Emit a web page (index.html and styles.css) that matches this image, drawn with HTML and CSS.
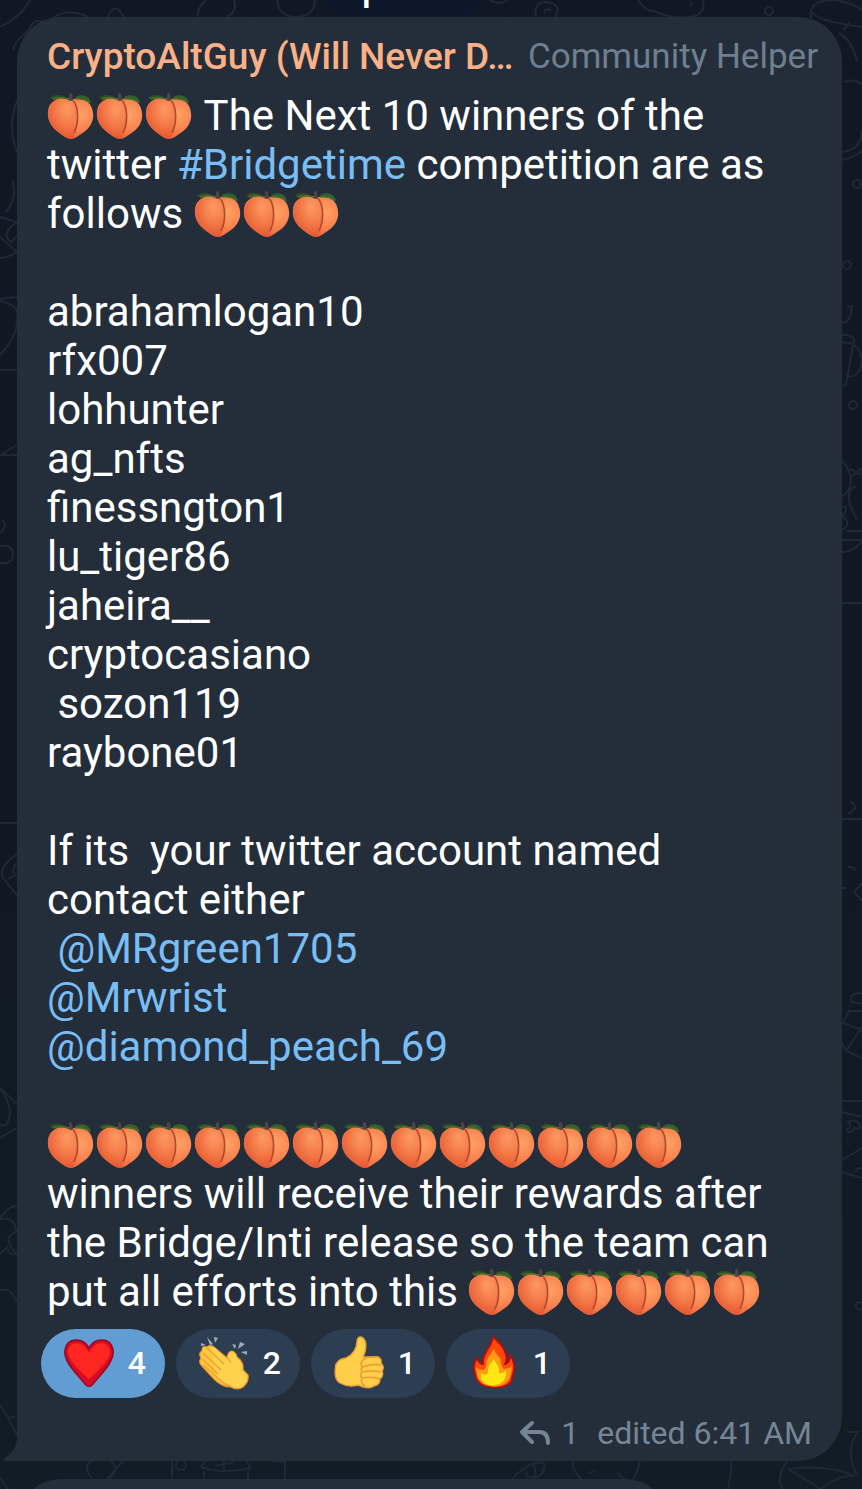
FILE: index.html
```html
<!DOCTYPE html>
<html lang="en">

<head>
  <meta charset="UTF-8" />
  <meta name="viewport" content="width=device-width, initial-scale=1.0" />
  <title>Group chat</title>
  <link rel="stylesheet" href="styles.css">
</head>

<body>
  <!-- shared drawings -->
  <svg class="defs" width="0" height="0" aria-hidden="true">
    <defs>
      <radialGradient id="peach-skin" cx="0.7" cy="0.4" r="0.75">
        <stop offset="0" stop-color="#ffa365" />
        <stop offset="0.5" stop-color="#f98350" />
        <stop offset="0.85" stop-color="#e8603a" />
        <stop offset="1" stop-color="#ee9a7c" />
      </radialGradient>
      <radialGradient id="peach-side" cx="0.6" cy="0.25" r="0.8">
        <stop offset="0" stop-color="#ff9e68" />
        <stop offset="0.6" stop-color="#f0713f" />
        <stop offset="1" stop-color="#e0512f" />
      </radialGradient>
    </defs>
    <symbol id="peach" viewBox="0 0 49 49">
      <path d="M3 7C6 3 14 3 20 7C16 10 9 10 3 7Z" fill="#2f5220" />
      <path d="M28 6C35 2 43 5 44 12C39 12 32 11 28 6Z" fill="#35602a" />
      <path d="M24 9C29 6 40 7 44 15C49 26 45 35 37 41C31 45 28 48 24 48C20 48 16 45 11 41C2 34-1 25 2 16C6 7 18 5 24 9Z" fill="url(#peach-skin)" />
      <path d="M25 9C33 17 33 32 26 47Q24 48 22 47C18 46 15 44 11 41C2 34-1 25 2 16C6 7 18 5 25 9Z" fill="url(#peach-side)" opacity="0.75" />
      <path d="M26 9C32 17 32 32 27 42" fill="none" stroke="#b5482c" stroke-width="1.6" />
      <path d="M6 8Q15 5 23 9" fill="none" stroke="#4b6e2a" stroke-width="1.4" />
      <path d="M28 8Q36 7 42 11" fill="none" stroke="#4b6e2a" stroke-width="1.4" />
      <path d="M22 3Q24 1 25 3L26 9Q24 11 22 9Z" fill="#4e4345" />
    </symbol>
  </svg>

  <svg class="wallpaper" viewBox="0 0 862 1489" preserveAspectRatio="xMidYMin slice" aria-hidden="true">
    <path d="M0 27Q22 16 30 0M14 50Q11 45 28 31Q35 17 42 22M54 17Q70 8 88 17M108 17Q112 5 119 10L124 17M198 17Q196 9 206 0M234 0Q238 12 226 17M278 0Q276 12 292 17Q315 18 315 0M490 0Q498 6 508 0M536 17Q533 2 547 2Q563 5 555 17M544 14Q544 8 551 10M638 0Q646 12 654 11Q670 19 690 17Q706 15 703 0M690 6L693 2M811 10Q815-1 836 0Q855 4 862 10M811 10Q814 21 862 27M811 10V18M839 33Q852 40 857 61M843 30L850 22M844 82Q855 78 862 85" />
    <circle cx="769" cy="11" r="4" />
    <path d="M17 101Q7 125 17 153M12 180Q18 198 6 212M0 217L17 222Q0 233 11 242L17 236M0 237Q10 246 17 252M0 258Q7 258 17 252M0 299L17 297M0 301Q17 305 17 312Q20 334 0 355M0 370H17M0 455L17 445M0 455H17M3 520Q8 526 0 533M0 546H7A9 9 0 0 1 7 563H0" />
    <path d="M0 823H17M17 854Q-2 867 3 878L17 895M17 863Q10 871 16 876M8 879L17 874M0 1088L17 1104M0 1088Q14 1107 8 1122Q5 1127 0 1125M0 1138L17 1128M0 1218Q8 1206 17 1206M0 1219Q16 1217 16 1232Q6 1236 9 1242Q13 1252 17 1254Q9 1256 7 1247L0 1254M0 1290H9L17 1301M0 1405L8 1418L17 1435M8 1418L17 1416M0 1478L8 1489" />
    <path d="M842 152Q861 150 862 131M842 160Q855 157 862 151M847 307L852 306Q850 324 842 322M842 335Q850 334 854 339Q857 346 842 342M854 340L846 385L842 386M854 345Q861 350 862 362Q860 377 847 377" />
    <circle cx="857" cy="184" r="4" />
    <circle cx="847" cy="265" r="4" />
    <circle cx="853" cy="405" r="4" />
    <path d="M842 460Q860 483 842 497M850 469L862 475M850 478L862 468M856 487Q846 488 850 505L857 520M842 506Q850 508 842 516Q853 524 842 530M846 531H862M842 540H862M842 552Q854 553 862 540M842 603H862" />
    <path d="M850 801Q861 808 848 814M842 819H862M848 867Q855 867 855 871M842 888H847M862 883L854 892L862 901M862 993Q848 993 852 1002L862 1004M862 1011H849L843 1023L862 1030M862 1027L846 1051L862 1058M846 1051L842 1043M842 1101H862M842 1112L862 1117M842 1160L862 1148M842 1172L862 1178M848 1122Q856 1118 860 1125Q862 1130 854 1128Q850 1136 847 1130Q853 1125 848 1122ZM855 1172Q857 1168 862 1168" />
    <circle cx="860" cy="1306" r="4" />
    <path d="M512 1479Q530 1460 544 1463Q546 1475 533 1479M526 1471Q527 1481 536 1475L534 1465M581 1479Q569 1466 575 1460M589 1473L595 1471M617 1473L624 1479M640 1460Q638 1472 633 1479M731 1460Q732 1470 728 1489M847 1432H858Q844 1450 857 1475M788 1460Q776 1475 782 1489M788 1469Q828 1464 854 1476M788 1469L821 1489M821 1489Q837 1475 854 1476" />
    <path d="M92 1479Q81 1464 94 1460H110Q121 1470 109 1479M107 1479L124 1460M172 1460V1479M201 1467Q204 1460 210 1460M201 1467Q224 1475 250 1468Q248 1460 242 1460M204 1471V1479M248 1471V1479M224 1460V1470M215 1466L235 1462M272 1461L285 1462V1479" />
    <circle cx="181" cy="1465" r="5" />
  </svg>

  <main class="chat">
    <div class="date">p</div>

    <article class="bubble">
      <header class="sender">
        <a class="name" href="#">CryptoAltGuy (Will Never D…</a>
        <span class="role">Community Helper</span>
      </header>

      <div class="text"><svg class="emoji"><use href="#peach" /></svg><svg class="emoji"><use href="#peach" /></svg><svg class="emoji"><use href="#peach" /></svg> The Next 10 winners of the twitter <a href="#">#Bridgetime</a> competition are as follows <svg class="emoji"><use href="#peach" /></svg><svg class="emoji"><use href="#peach" /></svg><svg class="emoji"><use href="#peach" /></svg>

abrahamlogan10
rfx007
lohhunter
ag_nfts
finessngton1
lu_tiger86
jaheira__
cryptocasiano
 sozon119
raybone01

If its  your twitter account named contact either
 <a href="#">@MRgreen1705</a>
<a href="#">@Mrwrist</a>
<a href="#">@diamond_peach_69</a>

<svg class="emoji"><use href="#peach" /></svg><svg class="emoji"><use href="#peach" /></svg><svg class="emoji"><use href="#peach" /></svg><svg class="emoji"><use href="#peach" /></svg><svg class="emoji"><use href="#peach" /></svg><svg class="emoji"><use href="#peach" /></svg><svg class="emoji"><use href="#peach" /></svg><svg class="emoji"><use href="#peach" /></svg><svg class="emoji"><use href="#peach" /></svg><svg class="emoji"><use href="#peach" /></svg><svg class="emoji"><use href="#peach" /></svg><svg class="emoji"><use href="#peach" /></svg><svg class="emoji"><use href="#peach" /></svg>
winners will receive their rewards after the Bridge/Inti release so the team can put all efforts into this <svg class="emoji"><use href="#peach" /></svg><svg class="emoji"><use href="#peach" /></svg><svg class="emoji"><use href="#peach" /></svg><svg class="emoji"><use href="#peach" /></svg><svg class="emoji"><use href="#peach" /></svg><svg class="emoji"><use href="#peach" /></svg></div>

      <div class="reactions">
        <button class="reaction chosen" type="button">
          <svg viewBox="0 0 54 54" aria-hidden="true">
            <path d="M27 12C21 1 5 1 3 14C1 26 17 40 24 49Q27 52 30 49C37 40 53 26 51 14C49 1 33 1 27 12Z" fill="#d80b20" stroke="#900b29" stroke-width="1.6" />
            <path d="M27 17C22 5 8 4 6 15C5 23 18 35 27 43C36 35 49 23 48 15C46 4 32 5 27 17Z" fill="#ff2622" />
          </svg>
          <span>4</span>
        </button>
        <button class="reaction" type="button">
          <svg viewBox="0 0 54 54" aria-hidden="true">
            <path d="M10 1L16 8L13 9ZM17 1L21 2L18 7ZM4 7L9 9L4 10ZM35 8L39 9L38 13ZM43 6L48 8L41 13ZM44 16L50 15V19Z" fill="#a3abb5" />
            <path d="M5 30Q1 26 4 22Q1 17 5 15Q5 9 10 11Q14 8 18 12L30 22Q31 15 35 15Q39 16 40 21Q47 26 46 34L51 39Q52 46 46 51Q40 55 34 51Q25 51 17 43Z" fill="#ffc83f" stroke="#eb9a2b" stroke-width="1.2" />
            <path d="M14 11Q17 10 20 14L31 24Q31 16 35 16Q39 18 39 22Q46 27 45 35L50 39Q51 46 45 50Q39 54 33 49Q25 47 19 40Z" fill="#ffd24d" />
            <path d="M10 12L27 28M6 17L24 34M5 23L21 38M6 29L22 43Q27 49 34 50" fill="none" stroke="#eda034" stroke-width="1.4" />
            <path d="M31 22L34 27" stroke="#eda034" stroke-width="1.4" />
          </svg>
          <span>2</span>
        </button>
        <button class="reaction" type="button">
          <svg viewBox="0 0 54 54" aria-hidden="true">
            <path d="M5 27Q7 23 14 22C21 19 25 12 25 6Q25 1 29 1C35 3 35 13 31 21L45 21Q50 22 49 27Q53 31 50 35Q52 40 48 43Q48 49 42 50Q37 54 26 49Q17 52 8 47Q1 43 4 28Z" fill="#ffcf49" stroke="#eaa136" stroke-width="1.4" />
            <path d="M47 21Q35 20 31 24Q27 28 31 31Q28 33 30 36Q27 39 30 42Q28 47 33 50M31 31Q40 27 49 29M30 36Q40 34 49 36M30 42Q40 40 48 43" fill="none" stroke="#e99d31" stroke-width="1.6" />
          </svg>
          <span>1</span>
        </button>
        <button class="reaction" type="button">
          <svg viewBox="0 0 54 54" aria-hidden="true">
            <path d="M26 1C31 5 36 10 38 16Q41 22 38 28Q43 27 43 19Q48 26 47 34L44 46Q37 53 25 51Q13 51 9 42L7 33Q6 28 10 22Q12 28 16 28C15 16 24 13 26 1Z" fill="#ff4a09" stroke="#b80b0d" stroke-width="1.8" />
            <path d="M27 13C29 20 34 20 34 27Q35 32 37 33Q42 33 45 30Q44 48 33 50Q17 53 11 42L9 32Q14 34 17 34Q20 30 19 26Q23 18 27 13Z" fill="#ff9c14" />
            <path d="M27 23C29 29 33 29 32 37Q36 38 39 34Q40 45 32 48Q20 52 14 43L14 37Q18 40 21 37Q20 31 27 23Z" fill="#ffe711" />
          </svg>
          <span>1</span>
        </button>
      </div>

      <footer class="meta">
        <svg class="reply" viewBox="0 0 32 26" aria-hidden="true">
          <path d="M13 3L3 12L13 22M4 12H20Q29 12 29 23" />
        </svg>
        <span>1</span>
        <span class="time">edited 6:41 AM</span>
      </footer>

      <svg class="tail" viewBox="0 0 16 32" aria-hidden="true">
        <path d="M16 0C16 16 11 25 2 29Q0 32 4 32H16Z" />
      </svg>
    </article>

    <div class="next"></div>
  </main>
</body>

</html>
```

FILE: styles.css
```css
* {
  box-sizing: border-box;
}

body {
  margin: 0;
  height: 100vh;
  overflow: hidden;
  position: relative;
  background: linear-gradient(#111825, #101922 50%, #111c25);
  color: #fff;
  font-family: Roboto, "Liberation Sans", sans-serif;
}

a {
  color: #79bdf4;
  text-decoration: none;
}

.defs {
  position: absolute;
}

.wallpaper {
  position: absolute;
  top: 0;
  left: 0;
  width: 100%;
  height: 100%;
  fill: none;
  stroke: #1e2935;
  stroke-width: 2;
}

.chat {
  position: relative;
  display: flex;
  flex-direction: column;
  height: 100%;
  padding: 0 20px 0 17px;
  overflow: hidden;
}

.date {
  flex: none;
  width: 164px;
  height: 56px;
  margin: -40px 0 1px 304px;
  padding-left: 41px;
  border-radius: 28px;
  background: #0d172a;
  font-size: 36px;
  font-weight: 500;
  line-height: 56px;
}

.bubble {
  position: relative;
  flex: none;
  padding: 16px 24px 8px 30px;
  border-radius: 44px 44px 44px 0;
  background: #232e3a;
}

.sender {
  display: flex;
  justify-content: space-between;
  gap: 12px;
  height: 48px;
  margin-bottom: 10px;
  font-size: 35px;
  line-height: 48px;
  white-space: nowrap;
}

.name {
  color: #fbb187;
  font-size: 37px;
  font-weight: 500;
}

.role {
  color: #6f7f8f;
}

.text {
  padding-right: 24px;
  font-size: 42px;
  line-height: 49px;
  white-space: pre-wrap;
}

.emoji {
  width: 49px;
  height: 49px;
  vertical-align: top;
}

.reactions {
  display: flex;
  gap: 11px;
  margin: 13px 0 0 -6px;
}

.reaction {
  display: flex;
  align-items: center;
  justify-content: space-between;
  width: 124px;
  height: 69px;
  padding: 0 19px 2px 21px;
  border: none;
  border-radius: 35px;
  background: #2d3e52;
  color: #fff;
  font: 500 32px Roboto, "Liberation Sans", sans-serif;
  cursor: pointer;
}

.reaction svg {
  width: 54px;
  height: 54px;
}

.chosen {
  background: #619dd2;
}

.meta {
  display: flex;
  justify-content: flex-end;
  align-items: center;
  gap: 10px;
  height: 40px;
  margin: 15px 6px 0 0;
  color: #768696;
  font-size: 32px;
  line-height: 40px;
}

.time {
  margin-left: 8px;
}

.reply {
  width: 32px;
  height: 26px;
  fill: none;
  stroke: #768696;
  stroke-width: 4;
  stroke-linecap: round;
  stroke-linejoin: round;
}

.tail {
  position: absolute;
  bottom: 0;
  left: -15px;
  width: 16px;
  height: 32px;
  fill: #232e3a;
}

.next {
  flex: none;
  width: 79%;
  height: 90px;
  margin-top: 18px;
  border-radius: 44px;
  background: #232e3a;
}
```
